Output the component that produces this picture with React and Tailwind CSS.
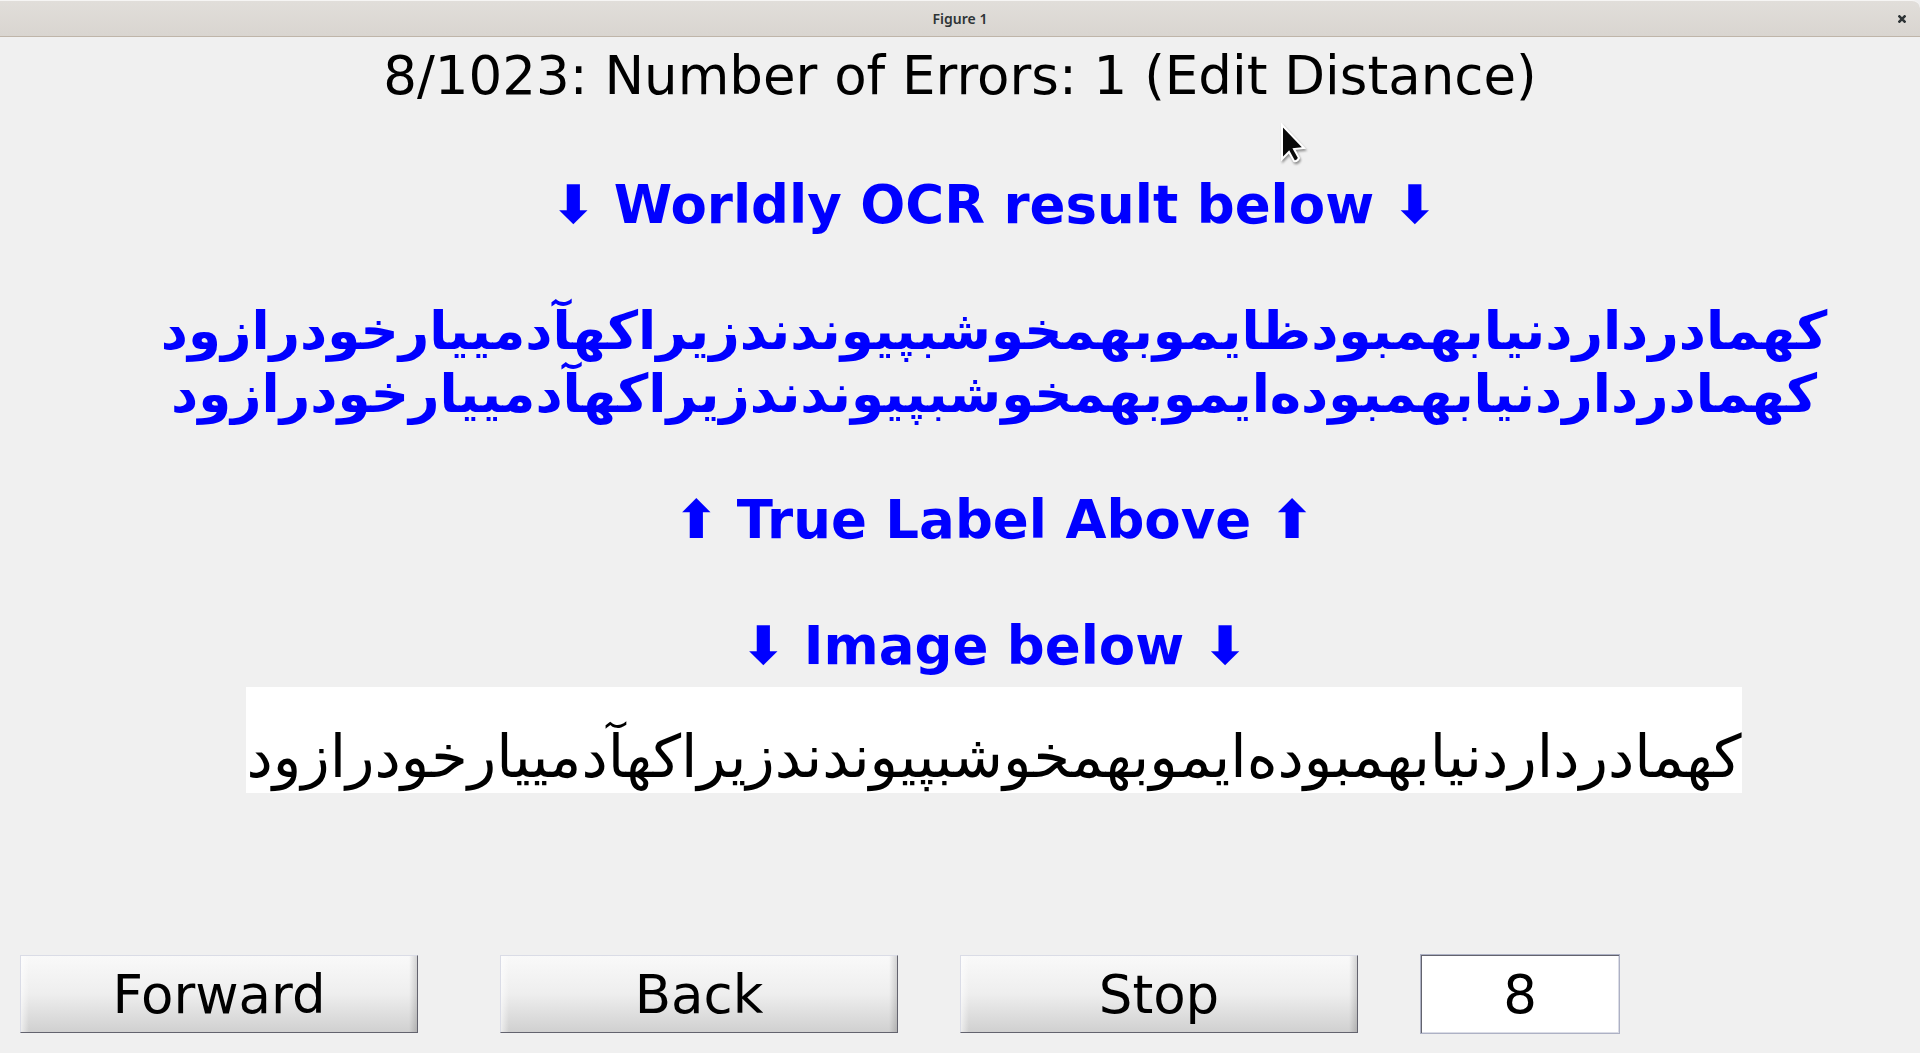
import React, { useState } from 'react';

const recognizedText = 'کهمادرداردنیابهمبودظایموبهمخوشبپیوندندزیراکهآدمییارخودرازود';
const trueLabel = 'کهمادرداردنیابهمبوده‌ایموبهمخوشبپیوندندزیراکهآدمییارخودرازود';

const FigureButton = ({ children, onClick }) => (
  <button
    onClick={onClick}
    className="relative w-full max-w-[398px] h-[78px] text-[53px] leading-none bg-linear-to-b from-[#f9f9f9] via-[#eeeeee] to-[#d0d0d0] border border-t-[#dadce6] border-l-[#dadce6] border-r-[#63636e] border-b-[#63636e]"
  >
    {/* bevel on the left and right edges */}
    <span className="absolute inset-y-0 left-0 w-2 bg-linear-to-r from-white/60 to-transparent"></span>
    <span className="absolute inset-y-0 right-0 w-2 bg-linear-to-l from-black/15 to-transparent"></span>
    {children}
  </button>
);

const App = () => {
  const [index, setIndex] = useState('8');

  return (
    <div className="relative min-h-screen flex flex-col bg-[#f0f0f0] text-black font-['DejaVu_Sans',sans-serif]">
      <header className="h-[37px] shrink-0 flex items-center bg-linear-to-b from-[#e1deda] to-[#d9d5d0] border-t border-t-[#f6f5f4] border-b border-b-[#bfb5a9] rounded-tr-lg">
        <div className="w-9"></div>
        <h1 className="flex-1 text-center text-[14px] font-semibold text-[#2e3436] font-['Noto_Sans',sans-serif]">Figure 1</h1>
        <button aria-label="Close" className="w-9 flex justify-center text-[#2e3436]">
          <svg width="8" height="8" viewBox="0 0 8 8" fill="none" stroke="currentColor" strokeWidth="2.6">
            <path d="M0.5 0.5 L7.5 7.5 M7.5 0.5 L0.5 7.5" />
          </svg>
        </button>
      </header>

      <main className="flex-1 flex flex-col">
        <h2 className="text-center text-[53px] leading-[78px]">8/1023: Number of Errors: 1 (Edit Distance)</h2>

        <div className="pt-[58px] pl-17 text-center text-[53px] leading-[63px] font-bold text-[#0000ff]">
          <p>⬇ Worldly OCR result below ⬇</p>
          <p className="pt-[63px]" dir="rtl">{recognizedText}</p>
          <p dir="rtl">{trueLabel}</p>
          <p className="pt-[63px]">⬆ True Label Above ⬆</p>
          <p className="pt-[63px]">⬇ Image below ⬇</p>
        </div>

        <div className="pl-17 pt-2.5 flex justify-center">
          <p dir="rtl" className="h-[106px] pt-[30px] bg-white text-[59px] leading-[80px] whitespace-nowrap">{trueLabel}</p>
        </div>

        <div className="mt-auto pl-5 pb-[19px] grid grid-cols-[24fr_23fr_23fr_25fr] items-center">
          <FigureButton onClick={() => setIndex(String(Number(index) + 1))}>Forward</FigureButton>
          <FigureButton onClick={() => setIndex(String(Number(index) - 1))}>Back</FigureButton>
          <FigureButton>Stop</FigureButton>
          <input
            aria-label="Index"
            value={index}
            onChange={(e) => setIndex(e.target.value)}
            className="w-[200px] h-20 bg-white text-center text-[53px] border border-[#adb1c4] shadow-[inset_1px_1px_0_#63636e,inset_-1px_-1px_0_#dadce6] outline-none"
          />
        </div>
      </main>

      <svg
        className="absolute left-[1280px] top-[122px] pointer-events-none drop-shadow-[1px_2px_1px_rgba(0,0,0,0.4)]"
        width="28" height="42" viewBox="0 0 28 42"
      >
        <path d="M2 3 L2 37 L9 30 L14 39 Q17 40 19 36 L14 27 L24 26 Z" fill="#0a0a0a" stroke="white" strokeWidth="2" />
      </svg>
    </div>
  );
};

export default App;
